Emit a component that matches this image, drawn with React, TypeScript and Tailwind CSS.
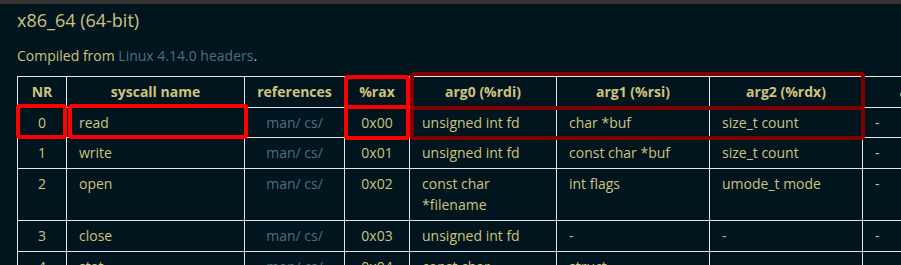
import React from 'react';

type Row = {
  nr: number;
  name: string;
  rax: string;
  args: string[];
};

const rows: Row[] = [
  { nr: 0, name: 'read', rax: '0x00', args: ['unsigned int fd', 'char *buf', 'size_t count', '-', '-', '-'] },
  { nr: 1, name: 'write', rax: '0x01', args: ['unsigned int fd', 'const char *buf', 'size_t count', '-', '-', '-'] },
  { nr: 2, name: 'open', rax: '0x02', args: ['const char *filename', 'int flags', 'umode_t mode', '-', '-', '-'] },
  { nr: 3, name: 'close', rax: '0x03', args: ['unsigned int fd', '-', '-', '-', '-', '-'] },
  { nr: 4, name: 'stat', rax: '0x04', args: ['const char *filename', 'struct\nstat *statbuf', '-', '-', '-', '-'] },
  { nr: 5, name: 'fstat', rax: '0x05', args: ['unsigned int fd', 'struct\nstat *statbuf', '-', '-', '-', '-'] },
];

const headers = ['arg0 (%rdi)', 'arg1 (%rsi)', 'arg2 (%rdx)', 'arg3 (%r10)', 'arg4 (%r8)', 'arg5 (%r9)'];

const cell = 'border border-[#e6e6e6] px-3 py-1 align-top';

const App: React.FC = () => {
  return (
    <div className="w-[901px] h-[265px] overflow-hidden bg-[#01151f] text-[#cdc37c] font-['Open_Sans',sans-serif]">
      <div className="h-[4px] bg-[#353535]" />
      <div className="h-px bg-[#101010]" />
      <div className="pl-[17px]">
        <h1 className="mt-[3px] text-[18px] leading-[25px] font-normal">x86_64 (64-bit)</h1>
        <p className="mt-3 text-[14px] leading-[22px]">
          Compiled from <a className="text-[#4d6f7f]">Linux 4.14.0 headers</a>.
        </p>

        <div className="relative mt-[9px] w-max">
          <table className="table-fixed border-collapse w-[1325px] text-[14px] leading-[21.6px]">
            <colgroup>
              <col className="w-[49px]" />
              <col className="w-[178px]" />
              <col className="w-[100px]" />
              <col className="w-[65px]" />
              <col className="w-[147px]" />
              <col className="w-[153px]" />
              <col className="w-[153px]" />
              <col className="w-[153px]" />
              <col className="w-[153px]" />
              <col className="w-[174px]" />
            </colgroup>
            <thead>
              <tr className="font-bold">
                <th className={`${cell} text-center`}>NR</th>
                <th className={`${cell} text-center`}>syscall name</th>
                <th className={`${cell} text-center`}>references</th>
                <th className={`${cell} text-center`}>%rax</th>
                {headers.map((h) => (
                  <th key={h} className={`${cell} text-center whitespace-nowrap`}>
                    {h}
                  </th>
                ))}
              </tr>
            </thead>
            <tbody>
              {rows.map((r) => (
                <tr key={r.nr}>
                  <td className={`${cell} text-center`}>{r.nr}</td>
                  <td className={cell}>{r.name}</td>
                  <td className={`${cell} text-center text-[#4d6f7f]`}>
                    <a>man/</a> <a>cs/</a>
                  </td>
                  <td className={`${cell} text-center`}>{r.rax}</td>
                  {r.args.map((a, i) => (
                    <td key={i} className={`${cell} whitespace-pre-line`}>
                      {a}
                    </td>
                  ))}
                </tr>
              ))}
            </tbody>
          </table>

          {/* highlight boxes */}
          <div className="absolute left-[-1px] top-[28px] w-[51px] h-[35px] border-4 border-[#ff0000] rounded-[4px]" />
          <div className="absolute left-[51px] top-[28px] w-[180px] h-[35px] border-4 border-[#ff0000] rounded-[4px]" />
          <div className="absolute left-[327px] top-[-1px] w-[66px] h-[34px] border-4 border-[#ff0000] rounded-[4px]" />
          <div className="absolute left-[327px] top-[29px] w-[66px] h-[35px] border-4 border-[#ff0000] rounded-[4px]" />
          <div className="absolute left-[393px] top-[-4px] w-[455px] h-[38px] border-4 border-[#800000] rounded-[4px]" />
          <div className="absolute left-[393px] top-[30px] w-[455px] h-[34px] border-4 border-[#800000] rounded-[4px]" />
        </div>
      </div>
    </div>
  );
};

export default App;
